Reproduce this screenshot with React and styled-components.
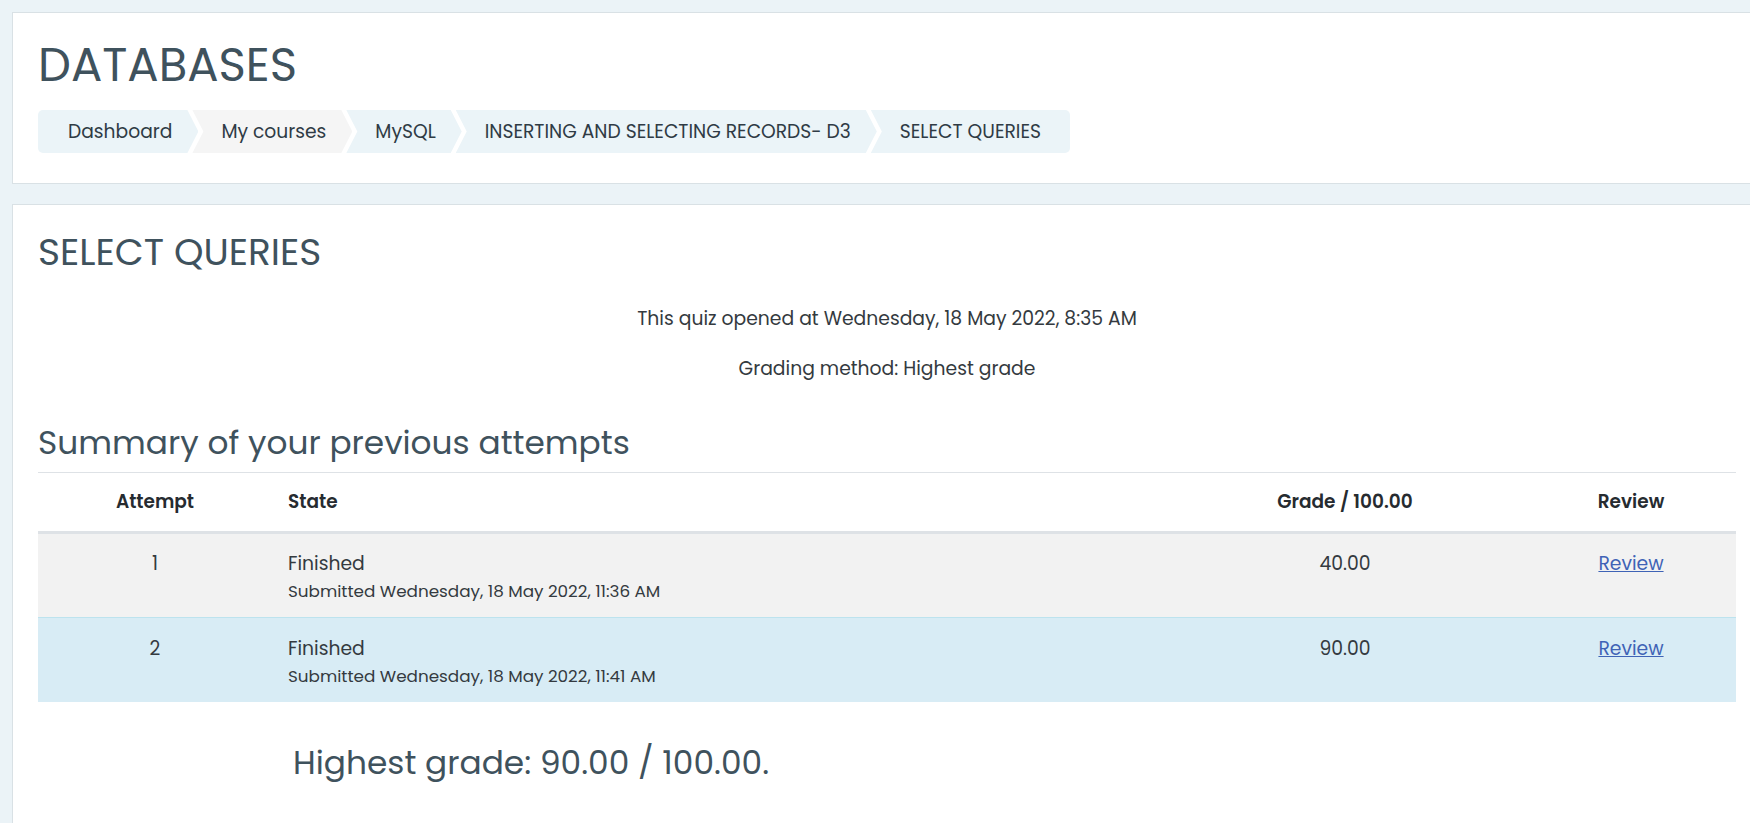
import React from 'react'
import styled, { createGlobalStyle } from 'styled-components'

const GlobalStyle = createGlobalStyle`
  html, body {
    margin: 0;
    padding: 0;
    overflow: hidden;
    background: #ebf3f7;
  }
  body {
    font-family: 'Poppins', 'Open Sans', sans-serif;
    color: #343a40;
  }
`

const Page = styled.div`
  width: 1762px;
  padding: 12px 0 0 12px;
  box-sizing: border-box;
`

const Card = styled.section`
  background: #fff;
  border: 1px solid #d9e1e5;
  width: 1750px;
  box-sizing: border-box;
  padding: ${p => p.pad};
  margin-bottom: 20px;
  min-height: ${p => p.minHeight || 'auto'};
`

const PageTitle = styled.h1`
  margin: 0;
  font-size: 46.5px;
  line-height: 55px;
  font-weight: 400;
  color: #3f525d;
`

const Crumbs = styled.nav`
  display: flex;
  margin-top: 18px;
  height: 43px;
`

const Crumb = styled.div`
  display: flex;
  align-items: center;
  height: 43px;
  padding: 0 ${p => (p.last ? '29px' : '26px')} 0 ${p => (p.first ? '30px' : '29px')};
  margin-left: ${p => (p.first ? '0' : '-6px')};
  background: ${p => (p.active ? '#f5f5f5' : '#ebf4f8')};
  border-radius: ${p => (p.first ? '5px 0 0 5px' : p.last ? '0 5px 5px 0' : '0')};
  clip-path: ${p =>
    p.first
      ? 'polygon(0 0, calc(100% - 11px) 0, 100% 50%, calc(100% - 11px) 100%, 0 100%)'
      : p.last
        ? 'polygon(0 0, 100% 0, 100% 100%, 0 100%, 11px 50%)'
        : 'polygon(0 0, calc(100% - 11px) 0, 100% 50%, calc(100% - 11px) 100%, 0 100%, 11px 50%)'};
  font-size: 18.7px;
  color: #2f3b45;
  white-space: nowrap;
`

const SectionTitle = styled.h2`
  margin: 0;
  font-size: 37.5px;
  line-height: 45px;
  font-weight: 400;
  color: #3f525d;
`

const Info = styled.p`
  margin: ${p => p.gap} 0 0;
  text-align: center;
  font-size: 18.75px;
  line-height: 28px;
  color: #343a40;
`

const SubTitle = styled.h3`
  margin: 40px 0 0;
  padding-bottom: 10px;
  font-size: 32.8px;
  line-height: 39px;
  font-weight: 400;
  color: #3f525d;
  border-bottom: 1px solid #dee2e6;
`

const Table = styled.div`
  display: grid;
  grid-template-columns: 234px 892px 362px 210px;
`

const HeadCell = styled.div`
  padding: 15px 16px 16px;
  font-size: 18.5px;
  line-height: 27px;
  font-weight: 600;
  color: #262b30;
  text-align: ${p => p.align || 'center'};
  border-bottom: 3px solid #dee2e6;
`

const Cell = styled.div`
  padding: ${p => (p.row === 1 ? '16px 16px 14px' : '15px 16px 14px')};
  background: ${p => (p.row === 1 ? '#d8ecf5' : '#f2f2f2')};
  border-top: ${p => (p.row === 1 ? '1px solid #bde3ee' : '0')};
  text-align: ${p => p.align || 'center'};
  font-size: 18.75px;
  line-height: 29px;
  color: #343a40;
`

const Submitted = styled.div`
  margin-top: 1px;
  font-size: 16.8px;
  line-height: 24px;
`

const ReviewLink = styled.a`
  color: #3f63b6;
  text-decoration: underline;
  cursor: pointer;
`

const Highest = styled.h3`
  margin: 41px 0 0;
  padding-left: 255px;
  font-size: 32.8px;
  line-height: 39px;
  font-weight: 400;
  color: #3f525d;
`

const crumbs = [
  'Dashboard',
  'My courses',
  'MySQL',
  'INSERTING AND SELECTING RECORDS- D3',
  'SELECT QUERIES'
]

const attempts = [
  { n: 1, submitted: 'Submitted Wednesday, 18 May 2022, 11:36 AM', grade: '40.00' },
  { n: 2, submitted: 'Submitted Wednesday, 18 May 2022, 11:41 AM', grade: '90.00' }
]

const App = () => {
  return (
    <Page>
      <GlobalStyle />
      <Card pad='24px 25px 30px'>
        <PageTitle>DATABASES</PageTitle>
        <Crumbs>
          {crumbs.map((c, i) => (
            <Crumb
              key={c}
              first={i === 0}
              last={i === crumbs.length - 1}
              active={i === 1}
            >
              {c}
            </Crumb>
          ))}
        </Crumbs>
      </Card>
      <Card pad='25px 25px 40px' minHeight='700px'>
        <SectionTitle>SELECT QUERIES</SectionTitle>
        <Info gap='30px'>This quiz opened at Wednesday, 18 May 2022, 8:35 AM</Info>
        <Info gap='22px'>Grading method: Highest grade</Info>
        <SubTitle>Summary of your previous attempts</SubTitle>
        <Table>
          <HeadCell>Attempt</HeadCell>
          <HeadCell align='left'>State</HeadCell>
          <HeadCell>Grade / 100.00</HeadCell>
          <HeadCell>Review</HeadCell>
          {attempts.map((a, i) => (
            <React.Fragment key={a.n}>
              <Cell row={i}>{a.n}</Cell>
              <Cell row={i} align='left'>
                Finished
                <Submitted>{a.submitted}</Submitted>
              </Cell>
              <Cell row={i}>{a.grade}</Cell>
              <Cell row={i}>
                <ReviewLink>Review</ReviewLink>
              </Cell>
            </React.Fragment>
          ))}
        </Table>
        <Highest>Highest grade: 90.00 / 100.00.</Highest>
      </Card>
    </Page>
  )
}

export default App
